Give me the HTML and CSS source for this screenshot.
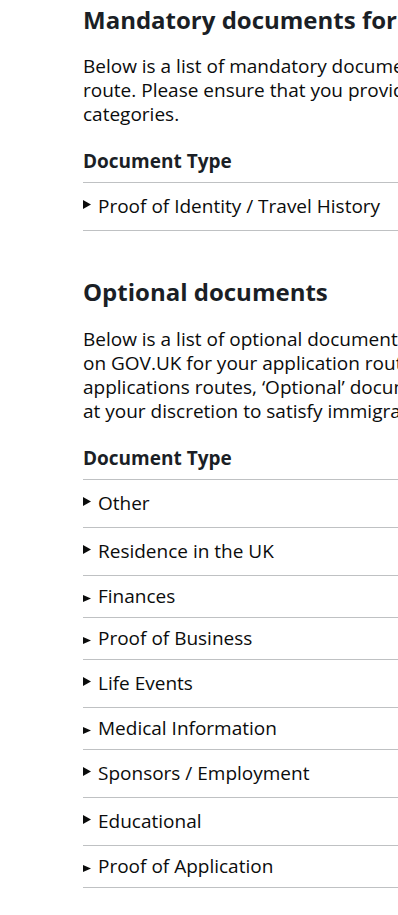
FILE: index.html
```html
<!DOCTYPE html>
<html lang="en">
<head>
    <meta charset="UTF-8">
    <meta name="viewport" content="width=device-width, initial-scale=1.0">
    <title>Documents</title>
    <link rel="stylesheet" href="styles.css">
</head>
<body>
    <main class="page">
        <section class="doc-section">
            <h2>Mandatory documents for your application</h2>
            <p class="intro">Below is a list of mandatory documents required for your application route. Please ensure that you provide documents for all of these categories.</p>
            <table class="doc-table">
                <thead>
                    <tr><th>Document Type</th></tr>
                </thead>
                <tbody>
                    <tr class="tall"><td><div class="label"><svg class="caret" viewBox="0 0 8 9"><polygon points="0,0 8,4.5 0,9"/></svg>Proof of Identity / Travel History</div></td></tr>
                </tbody>
            </table>
        </section>

        <section class="doc-section">
            <h2>Optional documents</h2>
            <p class="intro">Below is a list of optional documents as specified in the relevant guidance on GOV.UK for your application route. Please note that for some applications routes, ‘Optional’ documents may be provided by applicants at your discretion to satisfy immigration requirements.</p>
            <table class="doc-table">
                <thead>
                    <tr><th>Document Type</th></tr>
                </thead>
                <tbody>
                    <tr class="tall"><td><div class="label"><svg class="caret" viewBox="0 0 8 9"><polygon points="0,0 8,4.5 0,9"/></svg>Other</div></td></tr>
                    <tr class="tall"><td><div class="label"><svg class="caret" viewBox="0 0 8 9"><polygon points="0,0 8,4.5 0,9"/></svg>Residence in the UK</div></td></tr>
                    <tr class="short"><td><div class="label"><svg class="caret" viewBox="0 0 8 7"><polygon points="0,0 8,3.5 0,7"/></svg>Finances</div></td></tr>
                    <tr class="short"><td><div class="label"><svg class="caret" viewBox="0 0 8 7"><polygon points="0,0 8,3.5 0,7"/></svg>Proof of Business</div></td></tr>
                    <tr class="tall"><td><div class="label"><svg class="caret" viewBox="0 0 8 9"><polygon points="0,0 8,4.5 0,9"/></svg>Life Events</div></td></tr>
                    <tr class="short"><td><div class="label"><svg class="caret" viewBox="0 0 8 7"><polygon points="0,0 8,3.5 0,7"/></svg>Medical Information</div></td></tr>
                    <tr class="tall"><td><div class="label"><svg class="caret" viewBox="0 0 8 9"><polygon points="0,0 8,4.5 0,9"/></svg>Sponsors / Employment</div></td></tr>
                    <tr class="tall"><td><div class="label"><svg class="caret" viewBox="0 0 8 9"><polygon points="0,0 8,4.5 0,9"/></svg>Educational</div></td></tr>
                    <tr class="short"><td><div class="label"><svg class="caret" viewBox="0 0 8 7"><polygon points="0,0 8,3.5 0,7"/></svg>Proof of Application</div></td></tr>
                </tbody>
            </table>
        </section>
    </main>
</body>
</html>
```

FILE: styles.css
```css
html {
    overflow-x: hidden;
}
body {
    margin: 0;
    font-family: "Open Sans", Arial, sans-serif;
    color: #0b0c0c;
    background-color: #fff;
}
.page {
    width: 657px;
    padding: 5px 0 0 83px;
}
.doc-section {
    margin-bottom: 46px;
}
h2 {
    font-size: 24px;
    line-height: 30px;
    font-weight: 700;
    color: #1b1f26;
    margin: 0 0 19px;
}
.doc-section + .doc-section h2 {
    margin-bottom: 20px;
}
.intro {
    font-size: 19px;
    line-height: 24px;
    margin: 0 0 24px;
}
.doc-table {
    width: 100%;
    border-collapse: collapse;
    font-size: 19px;
    line-height: 23px;
}
.doc-table th {
    text-align: left;
    font-weight: 700;
    color: #1b1f26;
    padding: 0 0 9px;
    border-bottom: 1px solid #bfc1c3;
}
.doc-table td {
    padding: 12px 0;
    border-bottom: 1px solid #bfc1c3;
}
.doc-table .short td {
    padding: 9px 0;
}
.label {
    display: flex;
    align-items: flex-start;
}
.caret {
    flex: none;
    width: 8px;
    height: 9px;
    margin: 5px 7px 0 0;
    fill: #0b0c0c;
}
.short .caret {
    height: 7px;
    margin-top: 10px;
}
```
